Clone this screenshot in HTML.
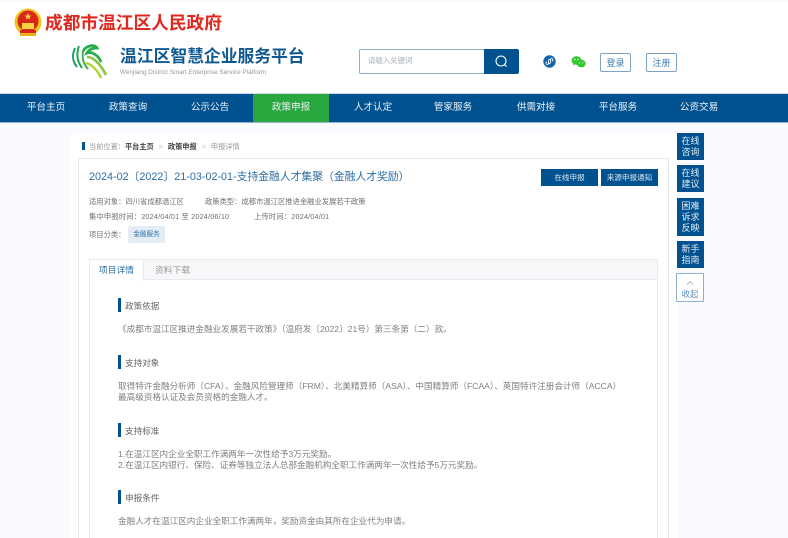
<!DOCTYPE html>
<html lang="zh"><head><meta charset="utf-8"><style>
html,body{margin:0;padding:0}
body{width:788px;height:538px;overflow:hidden;position:relative;background:#f8fafd;font-family:"Liberation Sans","Noto Sans CJK SC",sans-serif;color:#666}
.a{position:absolute;white-space:nowrap}
.n{position:absolute;top:94px;height:28px;line-height:28px;color:#eef3f8;font-size:9.6px;text-align:center}
.s{position:absolute;left:677px;width:27px;background:#00518f;color:#e6eef5;font-size:9px;line-height:11px;text-align:center;box-sizing:border-box;padding-top:3px}
.h{position:absolute;left:118px;width:3px;height:14px;background:#00518f}
.t{position:absolute;left:125px;font-size:8.6px;color:#666;white-space:nowrap;line-height:12px}
.p{position:absolute;left:118px;font-size:8.6px;color:#808080;white-space:nowrap;line-height:11px}
.m{position:absolute;font-size:7.3px;color:#707070;white-space:nowrap;line-height:10px}
</style></head><body>
<div class="a" style="left:0;top:2px;width:788px;height:92px;background:#fff"></div>
<svg class="a" style="left:14px;top:8px" width="28" height="30" viewBox="0 0 28 30"><circle cx="14" cy="14" r="13.5" fill="#f0c419"/><circle cx="14" cy="13" r="10.5" fill="#d8261c"/><rect x="6" y="22" width="16" height="5" fill="#d8261c"/><rect x="8" y="15" width="12" height="6" fill="#f5d442"/><path d="M14 5l1 2.5h2.5l-2 1.6.8 2.5-2.3-1.5-2.3 1.5.8-2.5-2-1.6H13z" fill="#f5d442"/><path d="M6 25h16v3H6z" fill="#e8b21a"/></svg>
<div class="a" style="left:45px;top:12px;font-size:17.7px;line-height:22px;font-weight:bold;color:#e0281f">成都市温江区人民政府</div>
<svg class="a" style="left:71px;top:43px" width="40" height="38" viewBox="0 0 40 38" fill="none"><path d="M4 5c-3 7-3 13 2 19" stroke="#1c9a6c" stroke-width="2"/><path d="M8 3c-3 8-2 15 3 22" stroke="#27a84f" stroke-width="2"/><path d="M12 8c-1 7 0 12 5 18" stroke="#38b44a" stroke-width="2"/><path d="M12 8C16 2 24 1 26 5c-4 0-8 1-10 5 5-2 12 3 14 9" stroke="#29ab4a" stroke-width="2.8"/><path d="M16 14c6 0 13 6 19 18" stroke="#8cc63f" stroke-width="2.6"/><path d="M15 20c5 1 11 6 15 15" stroke="#b5d334" stroke-width="2.4"/></svg>
<div class="a" style="left:120px;top:47px;font-size:16.8px;line-height:20px;font-weight:bold;color:#0f5a94">温江区智慧企业服务平台</div>
<div class="a" style="left:120px;top:69px;font-size:6.4px;line-height:8px;color:#999">Wenjiang District Smart Enterprise Service Platform</div>

<div class="a" style="left:359px;top:49px;width:125px;height:25px;box-sizing:border-box;border:1.5px solid #8fb0cf;background:#fff;border-right:0;border-radius:2px 0 0 2px;font-size:7.4px;line-height:22px;color:#a8b0ba;padding-left:8px">请输入关键词</div>
<div class="a" style="left:484px;top:49px;width:35px;height:25px;background:#00518f;border-radius:0 2px 2px 0"></div>
<svg class="a" style="left:494px;top:54px" width="15" height="15" viewBox="0 0 15 15" fill="none" stroke="#fff" stroke-width="1.1"><circle cx="7" cy="7" r="5"/><path d="M10.6 10.6l2 2"/></svg>
<svg class="a" style="left:543px;top:55px" width="13" height="13" viewBox="0 0 13 13"><circle cx="6.5" cy="6.5" r="6.2" fill="#0f66ad"/><path d="M5.5 8.7a1.3 1.3 0 1 1-1.4-1.8M7.5 4.3a1.3 1.3 0 1 1 1.4 1.8M5.5 8.5V5.5a1.4 1.4 0 0 1 2-1M7.5 4.5v3a1.4 1.4 0 0 1-2 1" stroke="#fff" stroke-width=".9" fill="none"/></svg>
<svg class="a" style="left:571px;top:56px" width="15" height="12" viewBox="0 0 15 12"><ellipse cx="5.5" cy="4.5" rx="5" ry="4.2" fill="#2fc92f"/><ellipse cx="10.2" cy="7.5" rx="4.5" ry="3.8" fill="#2fc92f"/><path d="M2.5 7.5l-.5 2 2.2-1.2zM12 10.5l1 1-.3-2z" fill="#2fc92f"/><circle cx="3.8" cy="3.5" r=".7" fill="#fff"/><circle cx="7" cy="3.5" r=".7" fill="#fff"/><circle cx="8.7" cy="6.8" r=".55" fill="#fff"/><circle cx="11.7" cy="6.8" r=".55" fill="#fff"/></svg>
<div class="a" style="left:600px;top:53px;width:31px;height:19px;box-sizing:border-box;border:1px solid #7ea3c6;border-radius:2px;background:#fff;text-align:center;font-size:9px;line-height:18px;color:#3f7cae">登录</div>
<div class="a" style="left:646px;top:53px;width:31px;height:19px;box-sizing:border-box;border:1px solid #7ea3c6;border-radius:2px;background:#fff;text-align:center;font-size:9px;line-height:18px;color:#3f7cae">注册</div>

<div class="a" style="left:0;top:93px;width:788px;height:1px;background:#c9d9e8"></div>
<div class="a" style="left:0;top:94px;width:788px;height:28px;background:#00518f"></div>
<div class="a" style="left:0;top:122px;width:788px;height:1px;background:#8fb0cf"></div>
<div class="a" style="left:253px;top:94px;width:76px;height:28px;background:#28a83f"></div>
<div class="n" style="left:7px;width:78px">平台主页</div>
<div class="n" style="left:89px;width:78px">政策查询</div>
<div class="n" style="left:171px;width:78px">公示公告</div>
<div class="n" style="left:252px;width:78px">政策申报</div>
<div class="n" style="left:334px;width:78px">人才认定</div>
<div class="n" style="left:414px;width:78px">管家服务</div>
<div class="n" style="left:497px;width:78px">供需对接</div>
<div class="n" style="left:579px;width:78px">平台服务</div>
<div class="n" style="left:660px;width:78px">公资交易</div>

<div class="a" style="left:70px;top:133px;width:607px;height:405px;background:#fff"></div>
<div class="a" style="left:82px;top:142px;width:3px;height:8px;background:#00518f"></div>
<div class="a" style="left:89px;top:142px;font-size:7.2px;line-height:10px;color:#999">当前位置：<span style="color:#444;font-weight:bold">平台主页</span><span style="color:#bbb;padding:0 5px">&gt;</span><span style="color:#444;font-weight:bold">政策申报</span><span style="color:#bbb;padding:0 5px">&gt;</span>申报详情</div>

<div class="a" style="left:78px;top:158px;width:591px;height:380px;box-sizing:border-box;border:1px solid #e6e8ec;border-bottom:0;border-radius:2px 2px 0 0"></div>
<div class="a" style="left:89px;top:170px;font-size:10.8px;line-height:15px;color:#2c6ea3;letter-spacing:0">2024-02〔2022〕21-03-02-01-支持金融人才集聚（金融人才奖励）</div>
<div class="a" style="left:541px;top:169px;width:57px;height:17px;background:#00518f;color:#dfe9f2;font-size:7.6px;line-height:18px;text-align:center">在线申报</div>
<div class="a" style="left:601px;top:169px;width:57px;height:17px;background:#00518f;color:#dfe9f2;font-size:7.6px;line-height:18px;text-align:center">来源申报通知</div>

<div class="m" style="left:89px;top:197px">适用对象：四川省成都温江区</div>
<div class="m" style="left:205px;top:197px">政策类型：成都市温江区推进金融业发展若干政策</div>
<div class="m" style="left:89px;top:212px;letter-spacing:.16px">集中申报时间：2024/04/01 至 2024/06/10</div>
<div class="m" style="left:254px;top:212px;letter-spacing:.16px">上传时间：2024/04/01</div>
<div class="m" style="left:89px;top:230px">项目分类：</div>
<div class="a" style="left:128px;top:226px;width:37px;height:17px;background:#e4edf5;border-radius:2px;border:0;font-size:6.6px;line-height:17px;text-align:center;color:#2f72a8">金融服务</div>

<div class="a" style="left:89px;top:259px;width:569px;height:279px;box-sizing:border-box;border:1px solid #e8eaee;border-bottom:0"></div>
<div class="a" style="left:89px;top:259px;width:569px;height:21px;box-sizing:border-box;background:#f6f7f9;border:1px solid #e8eaee"></div>
<div class="a" style="left:89px;top:259px;width:55px;height:22px;box-sizing:border-box;background:#fff;border:1px solid #e8eaee;border-bottom:0;text-align:center;font-size:8.8px;line-height:21px;color:#2c6ea3">项目详情</div>
<div class="a" style="left:155px;top:264px;font-size:8.8px;line-height:12px;color:#999">资料下载</div>

<div class="h" style="left:118px;top:298px"></div><div class="t" style="top:300px">政策依据</div>
<div class="p" style="top:324px">《成都市温江区推进金融业发展若干政策》（温府发〔2022〕21号）第三条第（二）款。</div>
<div class="h" style="top:355px"></div><div class="t" style="top:357px">支持对象</div>
<div class="p" style="top:381px">取得特许金融分析师（CFA）、金融风险管理师（FRM）、北美精算师（ASA）、中国精算师（FCAA）、英国特许注册会计师（ACCA）</div>
<div class="p" style="top:392px">最高级资格认证及会员资格的金融人才。</div>
<div class="h" style="top:423px"></div><div class="t" style="top:425px">支持标准</div>
<div class="p" style="top:449px">1.在温江区内企业全职工作满两年一次性给予3万元奖励。</div>
<div class="p" style="top:460px">2.在温江区内银行、保险、证券等独立法人总部金融机构全职工作满两年一次性给予5万元奖励。</div>
<div class="h" style="top:490px"></div><div class="t" style="top:492px">申报条件</div>
<div class="p" style="top:516px">金融人才在温江区内企业全职工作满两年，奖励资金由其所在企业代为申请。</div>

<div class="s" style="top:133px;height:27px">在线<br>咨询</div>
<div class="s" style="top:165px;height:27px">在线<br>建议</div>
<div class="s" style="top:198px;height:38px">困难<br>诉求<br>反映</div>
<div class="s" style="top:241px;height:27px">新手<br>指南</div>
<div class="a" style="left:676px;top:273px;width:28px;height:29px;box-sizing:border-box;border:1px solid #8fb0cf;background:#fff;border-radius:1px;text-align:center;font-size:8.4px;line-height:11px;color:#5c8fb8;padding-top:15px">收起</div>
<svg class="a" style="left:686px;top:280px" width="8" height="6" viewBox="0 0 8 6" fill="none" stroke="#9ab" stroke-width=".8"><path d="M1 4.5L4 1.5l3 3"/></svg>
</body></html>
